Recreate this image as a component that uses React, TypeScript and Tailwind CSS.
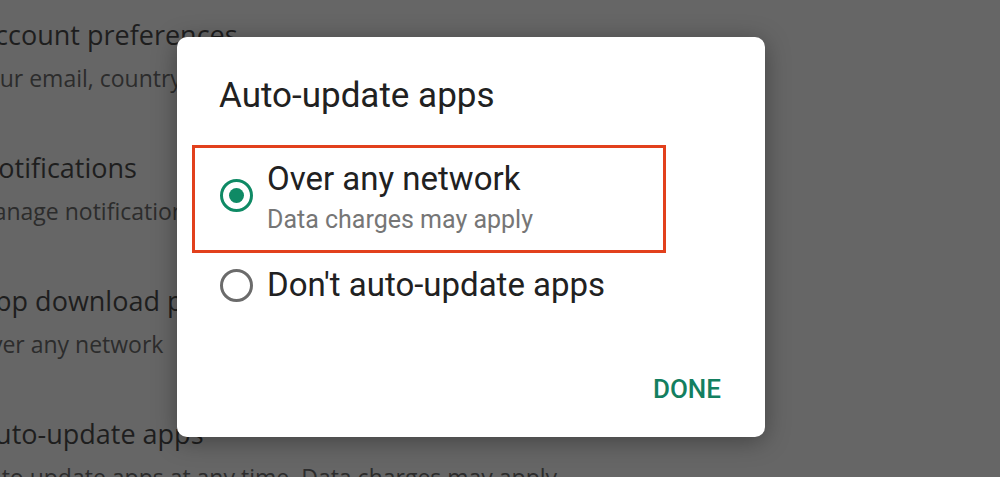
import React from "react";

const settings = [
  { title: "Account preferences", sub: "Your email, country and more" },
  { title: "Notifications", sub: "Manage notification settings" },
  { title: "App download preference", sub: "Over any network" },
  { title: "Auto-update apps", sub: "Auto update apps at any time. Data charges may apply" },
];

const Radio = ({ checked }: { checked: boolean }) => {
  return (
    <div
      className={
        checked
          ? "flex h-[33px] w-[33px] shrink-0 items-center justify-center rounded-full border-[3px] border-[#0f8a65]"
          : "flex h-[33px] w-[33px] shrink-0 items-center justify-center rounded-full border-[3px] border-[#6b6b6b]"
      }
    >
      {checked && <div className="h-[15px] w-[15px] rounded-full bg-[#0f8a65]" />}
    </div>
  );
};

const App = () => {
  return (
    <div className="relative h-[477px] w-[1000px] overflow-hidden bg-[#666666]">
      <div className="-ml-[22px] pt-[18px] font-['Open_Sans',sans-serif]">
        {settings.map((item, i) => {
          return (
            <div key={i} className="h-[133px] whitespace-nowrap">
              <div className="text-[27px] leading-[34px] text-[#1e1e1e]">{item.title}</div>
              <div className="-ml-[5px] mt-[11px] text-[23px] leading-[30px] text-[#2c2c2c]">{item.sub}</div>
            </div>
          );
        })}
      </div>

      <div className="absolute left-[177px] top-[37px] flex h-[400px] w-[588px] flex-col rounded-[10px] bg-white font-['Roboto',sans-serif] shadow-[0_4px_24px_rgba(0,0,0,0.35)]">
        <div className="pl-[42px] pt-[39px] text-[35px] leading-[40px] text-[#212121]">Auto-update apps</div>

        <div className="ml-[15px] mt-[29px] flex h-[108px] w-[474px] items-start border-[3px] border-[#e2401c] pl-[25px]">
          <div className="mt-[31px]">
            <Radio checked={true} />
          </div>
          <div className="ml-[14px] mt-[12px]">
            <div className="text-[33px] leading-[38px] text-[#212121]">Over any network</div>
            <div className="mt-[7px] text-[25px] leading-[30px] text-[#767676]">Data charges may apply</div>
          </div>
        </div>

        <div className="ml-[43px] mt-[13px] flex items-center">
          <Radio checked={false} />
          <div className="ml-[14px] text-[33px] leading-[38px] text-[#212121]">Don't auto-update apps</div>
        </div>

        <div className="mt-auto flex justify-end pb-[33px] pr-[44px]">
          <div className="text-[26px] font-medium leading-[30px] text-[#137f60]">DONE</div>
        </div>
      </div>
    </div>
  );
};

export default App;
